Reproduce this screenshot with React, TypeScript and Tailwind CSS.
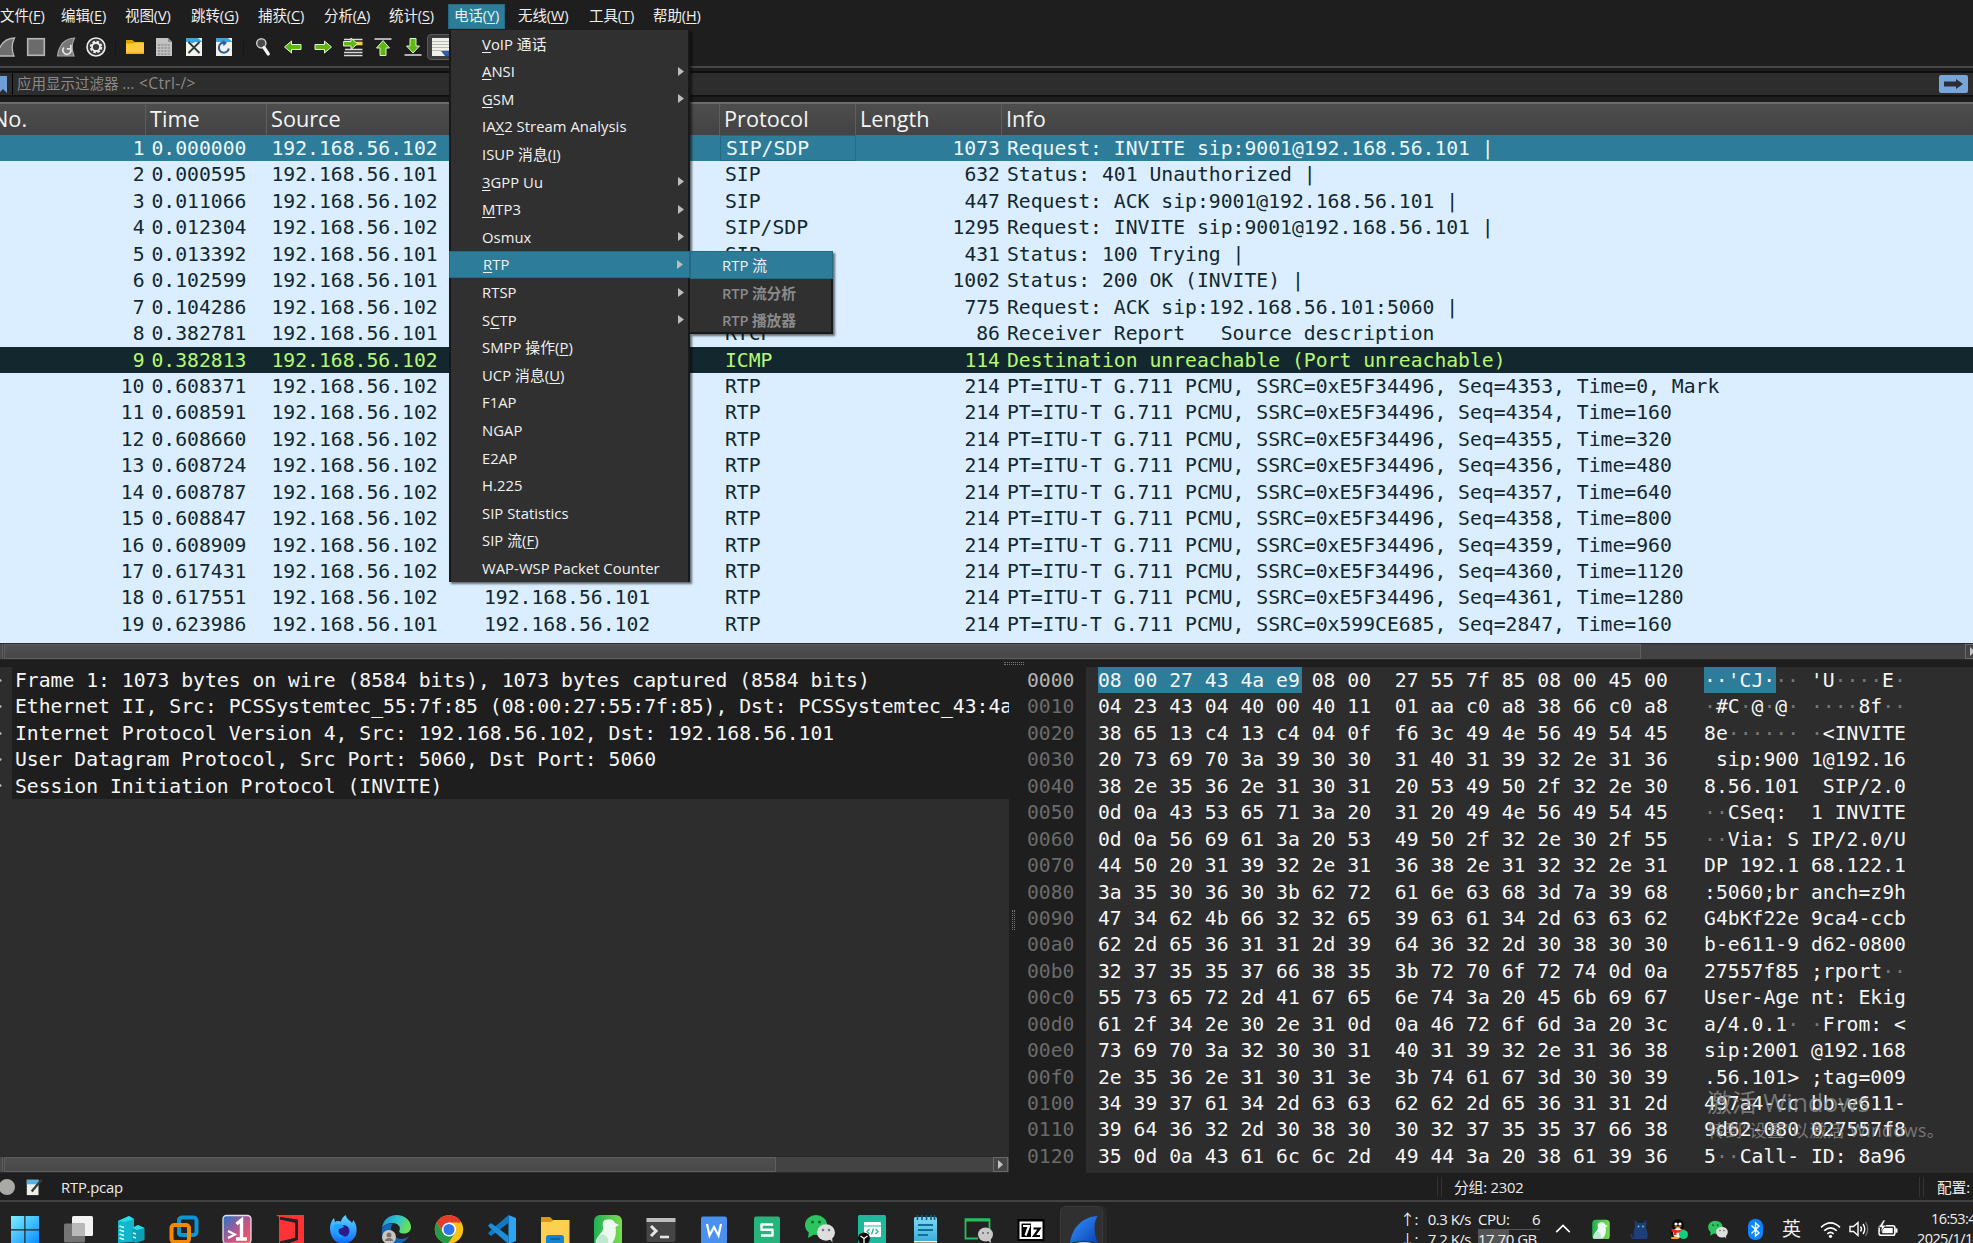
import { Fragment, type ReactNode } from "react";
import { clsx } from "clsx";

const UI = "font-['Open_Sans','Noto_Sans_CJK_SC',sans-serif]";
const MONO = "font-['DejaVu_Sans_Mono','Noto_Sans_CJK_SC',monospace] text-[19.73px] whitespace-pre";

/* ---------- data ---------- */

const menuBar = [
  { label: "文件", key: "F", width: "w-[61px]" },
  { label: "编辑", key: "E", width: "w-[64px]" },
  { label: "视图", key: "V", width: "w-[66px]" },
  { label: "跳转", key: "G", width: "w-[67px]" },
  { label: "捕获", key: "C", width: "w-[66px]" },
  { label: "分析", key: "A", width: "w-[65px]" },
  { label: "统计", key: "S", width: "w-[64px]" },
  { label: "电话", key: "Y", width: "w-[57px] mr-[8px]", active: true },
  { label: "无线", key: "W", width: "w-[71px]" },
  { label: "工具", key: "T", width: "w-[64px]" },
  { label: "帮助", key: "H", width: "w-[60px]" },
];

// the letter after "&" is the mnemonic
const telephonyMenu: { label: string; sub?: boolean; active?: boolean }[] = [
  { label: "&VoIP 通话" },
  { label: "&ANSI", sub: true },
  { label: "&GSM", sub: true },
  { label: "IA&X2 Stream Analysis" },
  { label: "ISUP 消息(&I)" },
  { label: "&3GPP Uu", sub: true },
  { label: "&MTP3", sub: true },
  { label: "Osmux", sub: true },
  { label: "&RTP", sub: true, active: true },
  { label: "RTSP", sub: true },
  { label: "S&CTP", sub: true },
  { label: "SMPP 操作(&P)" },
  { label: "UCP 消息(&U)" },
  { label: "F1AP" },
  { label: "NGAP" },
  { label: "E2AP" },
  { label: "H.225" },
  { label: "SIP Statistics" },
  { label: "SIP 流(&F)" },
  { label: "WAP-WSP Packet Counter" },
];

const A = "192.168.56.101";
const B = "192.168.56.102";
const rtp = (ssrc: string, seq: number, time: string) =>
  `PT=ITU-T G.711 PCMU, SSRC=0x${ssrc}, Seq=${seq}, Time=${time}`;

const packets: [string, string, string, string, number, string][] = [
  ["0.000000", B, A, "SIP/SDP", 1073, "Request: INVITE sip:9001@192.168.56.101 |"],
  ["0.000595", A, B, "SIP", 632, "Status: 401 Unauthorized |"],
  ["0.011066", B, A, "SIP", 447, "Request: ACK sip:9001@192.168.56.101 |"],
  ["0.012304", B, A, "SIP/SDP", 1295, "Request: INVITE sip:9001@192.168.56.101 |"],
  ["0.013392", A, B, "SIP", 431, "Status: 100 Trying |"],
  ["0.102599", A, B, "SIP/SDP", 1002, "Status: 200 OK (INVITE) |"],
  ["0.104286", B, A, "SIP", 775, "Request: ACK sip:192.168.56.101:5060 |"],
  ["0.382781", A, B, "RTCP", 86, "Receiver Report   Source description"],
  ["0.382813", B, A, "ICMP", 114, "Destination unreachable (Port unreachable)"],
  ["0.608371", B, A, "RTP", 214, rtp("E5F34496", 4353, "0, Mark")],
  ["0.608591", B, A, "RTP", 214, rtp("E5F34496", 4354, "160")],
  ["0.608660", B, A, "RTP", 214, rtp("E5F34496", 4355, "320")],
  ["0.608724", B, A, "RTP", 214, rtp("E5F34496", 4356, "480")],
  ["0.608787", B, A, "RTP", 214, rtp("E5F34496", 4357, "640")],
  ["0.608847", B, A, "RTP", 214, rtp("E5F34496", 4358, "800")],
  ["0.608909", B, A, "RTP", 214, rtp("E5F34496", 4359, "960")],
  ["0.617431", B, A, "RTP", 214, rtp("E5F34496", 4360, "1120")],
  ["0.617551", B, A, "RTP", 214, rtp("E5F34496", 4361, "1280")],
  ["0.623986", A, B, "RTP", 214, rtp("599CE685", 2847, "160")],
];

const tree = [
  "Frame 1: 1073 bytes on wire (8584 bits), 1073 bytes captured (8584 bits)",
  "Ethernet II, Src: PCSSystemtec_55:7f:85 (08:00:27:55:7f:85), Dst: PCSSystemtec_43:4a:e9",
  "Internet Protocol Version 4, Src: 192.168.56.102, Dst: 192.168.56.101",
  "User Datagram Protocol, Src Port: 5060, Dst Port: 5060",
  "Session Initiation Protocol (INVITE)",
];

const hexDump = [
  "08 00 27 43 4a e9 08 00 27 55 7f 85 08 00 45 00",
  "04 23 43 04 40 00 40 11 01 aa c0 a8 38 66 c0 a8",
  "38 65 13 c4 13 c4 04 0f f6 3c 49 4e 56 49 54 45",
  "20 73 69 70 3a 39 30 30 31 40 31 39 32 2e 31 36",
  "38 2e 35 36 2e 31 30 31 20 53 49 50 2f 32 2e 30",
  "0d 0a 43 53 65 71 3a 20 31 20 49 4e 56 49 54 45",
  "0d 0a 56 69 61 3a 20 53 49 50 2f 32 2e 30 2f 55",
  "44 50 20 31 39 32 2e 31 36 38 2e 31 32 32 2e 31",
  "3a 35 30 36 30 3b 62 72 61 6e 63 68 3d 7a 39 68",
  "47 34 62 4b 66 32 32 65 39 63 61 34 2d 63 63 62",
  "62 2d 65 36 31 31 2d 39 64 36 32 2d 30 38 30 30",
  "32 37 35 35 37 66 38 35 3b 72 70 6f 72 74 0d 0a",
  "55 73 65 72 2d 41 67 65 6e 74 3a 20 45 6b 69 67",
  "61 2f 34 2e 30 2e 31 0d 0a 46 72 6f 6d 3a 20 3c",
  "73 69 70 3a 32 30 30 31 40 31 39 32 2e 31 36 38",
  "2e 35 36 2e 31 30 31 3e 3b 74 61 67 3d 30 30 39",
  "34 39 37 61 34 2d 63 63 62 62 2d 65 36 31 31 2d",
  "39 64 36 32 2d 30 38 30 30 32 37 35 35 37 66 38",
  "35 0d 0a 43 61 6c 6c 2d 49 44 3a 20 38 61 39 36",
];

/* ---------- toolbar icons ---------- */

function Svg({ children, size = 20, className }: { children: ReactNode; size?: number; className?: string }) {
  return (
    <svg width={size} height={size} viewBox="0 0 20 20" fill="none" className={clsx("shrink-0", className)}>
      {children}
    </svg>
  );
}

const FIN = "M1.5 19C3 8 9 1.5 18.5 1C15.5 7 15.5 13 18 19Z";

const StartFin = () => (
  <Svg><path d={FIN} fill="#6d6d6d" stroke="#b9b9b9" strokeWidth="1.3" /></Svg>
);
const StopIcon = () => (
  <Svg><rect x="1.7" y="1.7" width="16.6" height="16.6" fill="#6b6b6b" stroke="#b5b5b5" strokeWidth="1.6" /></Svg>
);
const RestartFin = () => (
  <Svg>
    <path d={FIN} fill="#777" stroke="#a9a9a9" strokeWidth="1.2" />
    <path d="M8 10.5A4 4 0 1 0 14.5 11.5M14.8 7.8V11.8H10.8" stroke="#e2e2e2" strokeWidth="1.7" />
  </Svg>
);
const OptionsIcon = () => (
  <Svg>
    <circle cx="10" cy="10" r="9" fill="#3a3a3a" stroke="#ededed" strokeWidth="1.6" />
    <circle cx="10" cy="10" r="5.3" stroke="#ededed" strokeWidth="2" strokeDasharray="2.6 1.55" />
    <circle cx="10" cy="10" r="4" stroke="#ededed" strokeWidth="1.8" />
  </Svg>
);
const OpenFolder = () => (
  <Svg>
    <path d="M1 3H7.5L9.5 5H18.5V8H1Z" fill="#e0a100" />
    <path d="M1 6.5H8L10 5.5H19V17H1Z" fill="#ffca3f" />
    <path d="M1 15.5H19V17H1Z" fill="#f0ad1c" />
  </Svg>
);
const SaveFile = () => (
  <Svg>
    <path d="M2 1H14L18 5V19H2Z" fill="#c2c2c2" />
    <path d="M14 1V5H18Z" fill="#8d8d8d" />
    <path d="M4 8H16M4 11H16M4 14H16M4 17H16" stroke="#909090" strokeWidth="1.5" strokeDasharray="2.2 1" />
  </Svg>
);
const CloseFile = () => (
  <Svg>
    <path d="M2 1H18V19H2Z" fill="#f3f3ea" />
    <path d="M2 1H18V5H11L8 6.5L6 5H2Z" fill="#3aa6df" />
    <path d="M14 1H18V4.5Z" fill="#e8f4fb" />
    <path d="M4.5 5L15.5 16M15.5 5L4.5 16" stroke="#2c3a42" strokeWidth="1.8" />
  </Svg>
);
const ReloadFile = () => (
  <Svg>
    <path d="M2 1H18V19H2Z" fill="#f3f3ea" />
    <path d="M2 1H18V5H11L8 6.5L6 5H2Z" fill="#3aa6df" />
    <path d="M14 1H18V4.5Z" fill="#e8f4fb" />
    <path d="M11 5.8A5 5 0 1 0 14.8 11.5" stroke="#2f5b9c" strokeWidth="2" />
    <path d="M8.5 3L13 5.8L9.5 9.2Z" fill="#2f5b9c" />
  </Svg>
);
const FindIcon = () => (
  <Svg>
    <circle cx="8.3" cy="6.3" r="4.6" fill="#4a4a4a" stroke="#c8c8c8" strokeWidth="1.5" />
    <path d="M11 10.5L15.3 17" stroke="#f4f4f4" strokeWidth="3.2" strokeLinecap="round" />
  </Svg>
);
const GREEN = { fill: "#5fb80f", stroke: "#e2f3d2", strokeWidth: 1 };
const ArrowLeft = () => (
  <Svg><path d="M1.5 10L8.5 4V7.5H18V12.5H8.5V16Z" {...GREEN} /></Svg>
);
const ArrowRight = () => (
  <Svg><path d="M18.5 10L11.5 4V7.5H2V12.5H11.5V16Z" {...GREEN} /></Svg>
);
const GotoPacket = () => (
  <Svg>
    <path d="M1 2.5H19.5M2 12.5H19.5M1 15.5H19.5M1 18.5H19.5" stroke="#dcdcdc" strokeWidth="1.7" />
    <path d="M12 6.5H19.5" stroke="#f3d23a" strokeWidth="3.6" />
    <path d="M14.5 6.7L8 1V4.5H0.6V9H8V12.5Z" {...GREEN} />
  </Svg>
);
const FirstPacket = () => (
  <Svg>
    <path d="M1.5 2H18.5" stroke="#d6d6d6" strokeWidth="1.6" />
    <path d="M10 3.5L16.5 11H13V18.5H7V11H3.5Z" {...GREEN} />
  </Svg>
);
const LastPacket = () => (
  <Svg>
    <path d="M1.5 18H18.5" stroke="#d6d6d6" strokeWidth="1.6" />
    <path d="M10 16L16.5 9H13V1.5H7V9H3.5Z" {...GREEN} />
  </Svg>
);
const AutoScroll = () => (
  <Svg>
    <path d="M1 1H19V19H1Z" fill="#f1f1ea" />
    <path d="M1 4.5H19M1 7.5H19M1 10.5H19M1 13.5H19" stroke="#b5b8b5" />
    <path d="M10 14H19V19H14Z" fill="#2b5fae" />
  </Svg>
);

const toolGroups: ReactNode[][] = [
  [<StartFin />, <StopIcon />, <RestartFin />, <OptionsIcon />],
  [<OpenFolder />, <SaveFile />, <CloseFile />, <ReloadFile />],
  [<FindIcon />, <ArrowLeft />, <ArrowRight />, <GotoPacket />, <FirstPacket />, <LastPacket />],
];

/* ---------- top bars ---------- */

function MenuBar() {
  return (
    <div className={clsx(UI, "flex h-[29px] shrink-0 -ml-[5px] pt-1 text-[14.5px] tracking-[-0.1px] text-[#f0f0f0]")}>
      {menuBar.map((m) => (
        <div
          key={m.key}
          className={clsx(
            "flex h-[25px] shrink-0 items-center whitespace-nowrap pb-[2px] pl-[5px]",
            m.width,
            m.active && "border border-[#256a85] bg-[#2d7d9a] pl-1",
          )}
        >
          {m.label}(<span className="underline underline-offset-2">{m.key}</span>)
        </div>
      ))}
    </div>
  );
}

function ToolBar() {
  return (
    <div className="flex h-[37px] shrink-0 items-center -ml-[9px] pb-px">
      {toolGroups.map((group, g) => (
        <Fragment key={g}>
          {g > 0 && <div className="mx-1 h-4 w-px shrink-0 bg-[#161616]" />}
          {group.map((icon, i) => (
            <div key={i} className="flex w-[29.9px] shrink-0 justify-center">{icon}</div>
          ))}
        </Fragment>
      ))}
      <div className="flex h-[26px] w-[28px] shrink-0 items-center justify-center rounded-sm border border-[#5c5c5c] bg-[#3c3c3c]">
        <AutoScroll />
      </div>
    </div>
  );
}

function FilterBar() {
  return (
    <div className="flex h-[36px] shrink-0 flex-col border-t-2 border-[#454545] bg-[#1d1d1d] pt-[3px]">
      <div className="flex h-[26px] items-center border-y-2 border-[#101010] bg-[#2d2d2d]">
        <div className="flex h-full w-[13px] shrink-0 items-center border-r border-black">
          <svg width="7" height="17" viewBox="0 0 7 17">
            <path d="M0 0H7V17L3 13L0 16Z" fill="#6f9fd6" />
          </svg>
        </div>
        <div className={clsx(UI, "grow pl-[4px] text-[14.5px] text-[#8a8a8a]")}>
          应用显示过滤器 <span className="text-[15.6px] tracking-[0.3px]">… &lt;Ctrl-/&gt;</span>
        </div>
        <svg width="29" height="18" viewBox="0 0 29 18" className="mr-[5px] shrink-0">
          <rect width="29" height="18" rx="2" fill="#78a5da" />
          <path d="M5 6.5H17V4L24 9L17 14V11.5H5Z" fill="#2b2f35" />
        </svg>
      </div>
    </div>
  );
}

/* ---------- packet list ---------- */

function PacketHeader() {
  const names = ["No.", "Time", "Source", "Destination", "Protocol", "Length", "Info"];
  return (
    <div
      className={clsx(
        UI,
        "grid h-[35px] shrink-0 grid-cols-[146px_121px_213px_240px_136px_146px_1fr] border-b-2 border-t-2 border-b-[#1a1a1a] border-t-[#6a6a6a] bg-linear-to-b from-[#4d4d4d] to-[#434343] text-[21.7px] text-[#f4f4f4]",
      )}
    >
      {names.map((n, i) => (
        <div
          key={n}
          className={clsx(
            "flex items-center overflow-hidden whitespace-nowrap border-r",
            i < 6 ? "border-[#5e5e5e]" : "border-transparent",
            i === 0 ? "pl-0" : "pl-1",
          )}
        >
          <span className={clsx(i === 0 && "-ml-[8px]")}>{n}</span>
        </div>
      ))}
    </div>
  );
}

function PacketList() {
  return (
    <div className={clsx(MONO, "h-[508px] shrink-0 overflow-hidden bg-[#daeeff] text-[#12272e]")}>
      {packets.map(([time, src, dst, proto, len, info], i) => (
        <div
          key={i}
          className={clsx(
            "grid h-[26.45px] grid-cols-[147px_121px_212px_240px_136px_146px_1fr] leading-[28.4px]",
            i === 0 && "bg-[#2d7d9a] text-[#eef7fa]",
            i === 8 && "bg-[#12272e] text-[#b7f774]",
          )}
        >
          <span className="pr-[2.5px] text-right">{i + 1}</span>
          <span className="pl-[4.5px]">{time}</span>
          <span className="pl-[3.5px]">{src}</span>
          <span className="pl-[4px]">{dst}</span>
          <span className={clsx("h-[26.45px] pl-[5px]", i === 0 && "border border-[#256a85] pl-[4px] leading-[26.4px]")}>{proto}</span>
          <span className="pr-[2px] text-right">{len}</span>
          <span className="pl-[5px]">{info}</span>
        </div>
      ))}
    </div>
  );
}

function ScrollBar({ thumb, clipped }: { thumb: string; clipped?: boolean }) {
  return (
    <div className="flex h-[17px] shrink-0 overflow-hidden border-y border-[#2a2a2a] bg-[#434343]">
      <div className="mr-px w-[3px] shrink-0 border-r border-[#5e5e5e] bg-[#4a4a4a]" />
      <div className={clsx(thumb, "shrink-0 border border-[#5e5e5e] bg-linear-to-b from-[#4f4f4f] to-[#484848]")} />
      <div className="grow" />
      <div
        className={clsx(
          "flex w-[15px] shrink-0 items-center justify-center border border-[#6a6a6a] bg-[#454545]",
          clipped ? "-mr-[7px]" : "mr-px",
        )}
      >
        <svg width="5" height="9" viewBox="0 0 5 9"><path d="M0 0L5 4.5L0 9Z" fill="#c4c4c4" /></svg>
      </div>
    </div>
  );
}

/* ---------- detail panes ---------- */

function DetailTree() {
  return (
    <div className="flex w-[1009px] shrink-0 flex-col bg-[#2d2d2d]">
      <div className="h-[489px] overflow-hidden">
        {tree.map((t) => (
          <div key={t} className="flex h-[26.45px] items-center">
            <svg width="12" height="9" viewBox="0 0 12 9" className="shrink-0">
              <path d="M-3 0L2 4.5L-3 9Z" fill="#b0b0b0" />
            </svg>
            <div className={clsx(MONO, "h-full w-[997px] shrink-0 overflow-hidden bg-[#1e1e1e] pl-[3px] leading-[28.4px] text-[#f6f6f6]")}>{t}</div>
          </div>
        ))}
      </div>
      <ScrollBar thumb="w-[772px]" />
    </div>
  );
}

const ascii = (byte: string) => {
  const n = parseInt(byte, 16);
  return n >= 32 && n < 127 ? String.fromCharCode(n) : "·";
};

function AsciiRun({ bytes }: { bytes: string[] }) {
  return (
    <>
      {bytes.map((b, i) => {
        const c = ascii(b);
        return c === "·" ? <span key={i} className="text-[#777777]">{c}</span> : c;
      })}
    </>
  );
}

function HexRow({ line, row }: { line: string; row: number }) {
  const bytes = line.split(" ");
  const mark = row === 0 ? 6 : 0;
  return (
    <div className="flex h-[26.45px] leading-[28.4px]">
      <span className={clsx("w-[59px] shrink-0", row === 0 ? "text-[#b4b4b4]" : "text-[#6b6b6b]")}>
        {(row * 16).toString(16).padStart(4, "0")}
      </span>
      <span className="w-[618px] shrink-0 pl-[12px]">
        {mark > 0 && <span className="-mr-[2px] inline-block h-full bg-[#2d7d9a] pr-[2px]">{bytes.slice(0, mark).join(" ")}</span>}
        {mark > 0 && " "}
        {bytes.slice(mark, 8).join(" ")}
        {"  "}
        {bytes.slice(8).join(" ")}
      </span>
      <span>
        {mark > 0 && <span className="-mr-px inline-block h-full bg-[#2d7d9a] pr-px">{bytes.slice(0, mark).map(ascii).join("")}</span>}
        <AsciiRun bytes={bytes.slice(mark, 8)} /> <AsciiRun bytes={bytes.slice(8)} />
      </span>
    </div>
  );
}

function HexPane() {
  return (
    <div className={clsx(MONO, "relative grow overflow-hidden bg-linear-to-r from-[#1e1e1e] from-[59px] to-[#2d2d2d] to-[59px] text-[#f6f6f6]")}>
      {hexDump.map((line, i) => (
        <HexRow key={i} line={line} row={i} />
      ))}
      <div className={clsx(UI, "absolute left-[680px] top-[418px] text-[#9a9a9a]/70")}>
        <div className="text-[24.8px] leading-[34px] tracking-[0.1px]">激活 Windows</div>
        <div className="text-[17.5px] leading-[22px] tracking-[0.35px]">转到“设置”以激活 Windows。</div>
      </div>
    </div>
  );
}

/* ---------- telephony menu ---------- */

function Mnemonic({ text }: { text: string }) {
  const at = text.indexOf("&");
  if (at < 0) return <>{text}</>;
  return (
    <>
      {text.slice(0, at)}
      <span className="underline underline-offset-2">{text[at + 1]}</span>
      {text.slice(at + 2)}
    </>
  );
}

function TelephonyMenu() {
  return (
    <div className={clsx(UI, "absolute left-[449px] top-[30px] z-10 flex items-start text-[14.8px] tracking-[0.05px] text-[#f2f2f2]")}>
      <div className="h-[552px] w-[241px] border-x-2 border-[#191919] bg-[#303030] shadow-[2px_2px_2px_rgba(0,0,0,0.55)]">
        {telephonyMenu.map((m) => (
          <div
            key={m.label}
            className={clsx(
              "-mx-[2px] flex h-[27.6px] items-center justify-between whitespace-pre pl-[33px] pr-[6px]",
              m.active && "border border-[#256a85] bg-[#2d7d9a] pl-[32px] pr-[5px]",
            )}
          >
            <span><Mnemonic text={m.label} /></span>
            {m.sub && (
              <svg width="6" height="9" viewBox="0 0 6 9"><path d="M0 0L6 4.5L0 9Z" fill="#bdbdbd" /></svg>
            )}
          </div>
        ))}
      </div>
      <div className="mt-[221px] h-[83px] w-[143px] border-b-2 border-r-2 border-[#191919] bg-[#303030] shadow-[2px_2px_2px_rgba(0,0,0,0.55)]">
        <div className="-mr-[2px] flex h-[28px] items-center border border-[#256a85] bg-[#2d7d9a] pl-[31px]">RTP 流</div>
        <div className="flex h-[27.6px] items-center pl-[32px] font-semibold text-[#8a8a8a] tracking-[-0.2px]">RTP 流分析</div>
        <div className="flex h-[27px] items-center pl-[32px] font-semibold text-[#8a8a8a] tracking-[-0.2px]">RTP 播放器</div>
      </div>
    </div>
  );
}

/* ---------- status bar ---------- */

const Grip = () => <div className="h-5 w-[5px] shrink-0 border-x border-[#333333]" />;

function StatusBar() {
  return (
    <div className={clsx(UI, "flex h-[27px] shrink-0 items-center bg-[#1e1e1e] pt-px text-[14.8px] tracking-[-0.2px] text-[#ececec]")}>
      <div className="-ml-px mb-px h-4 w-4 shrink-0 rounded-full bg-[#a9aaa6]" />
      <Svg size={18} className="ml-[10px]">
        <path d="M2 2H15V19H2Z" fill="#efefea" />
        <path d="M2 2H15V7H2Z" fill="#55b2e4" />
        <path d="M18.5 2L9 13L7.5 15" stroke="#3a3a3a" strokeWidth="2.6" />
      </Svg>
      <div className="ml-[18px] w-[1376px] shrink-0">RTP.pcap</div>
      <Grip />
      <div className="ml-[12px] w-[465px] shrink-0">分组: 2302</div>
      <Grip />
      <div className="ml-[13px] whitespace-nowrap">配置: Default</div>
    </div>
  );
}

/* ---------- taskbar icons ---------- */

function App32({ children }: { children: ReactNode }) {
  return (
    <svg width="30" height="30" viewBox="0 0 30 30" fill="none" className="mx-[11.47px] shrink-0">
      {children}
    </svg>
  );
}

function WeChatShape() {
  return (
    <>
      <ellipse cx="11" cy="11" rx="11" ry="10" fill="#2dc45f" />
      <path d="M4 17L3 24L10 20Z" fill="#2dc45f" />
      <circle cx="7.5" cy="8" r="1.6" fill="#146b31" />
      <circle cx="14.5" cy="8" r="1.6" fill="#146b31" />
      <ellipse cx="21" cy="18.5" rx="9" ry="8.2" fill="#dedede" />
      <path d="M24 24L27.5 28.5L27 22Z" fill="#dedede" />
      <circle cx="18" cy="16" r="1.3" fill="#777" />
      <circle cx="24" cy="16" r="1.3" fill="#777" />
    </>
  );
}

function BirdShape() {
  return (
    <>
      <rect x="1" y="1" width="28" height="32" rx="6" fill="url(#bird)" />
      <path d="M12 6C17 4 21 6 22 9L26 11L22.5 13C24 21 21 29 17 31H3C1 24 9 20 10.5 14C9 11 9.5 7 12 6Z" fill="#eefaf1" />
      <path d="M3 31C3 23 8 19 12 21C16 24 16 28 14 31Z" fill="#bfe9cc" />
    </>
  );
}

function Gradients() {
  return (
    <svg width="0" height="0">
      <defs>
        <linearGradient id="win" x1="0" y1="0" x2="1" y2="1"><stop stopColor="#7df0ff" /><stop offset="1" stopColor="#078bff" /></linearGradient>
        <linearGradient id="mob" x1="0" y1="0" x2="1" y2="1"><stop stopColor="#1d76cb" /><stop offset=".55" stopColor="#c0558a" /><stop offset="1" stopColor="#ff5a5a" /></linearGradient>
        <linearGradient id="fox" x1="0" y1="0" x2="0" y2="1"><stop stopColor="#5fd6ff" /><stop offset="1" stopColor="#0a6cff" /></linearGradient>
        <linearGradient id="edge" x1="0" y1="0" x2="1" y2="0.3"><stop stopColor="#1b8fd6" /><stop offset=".55" stopColor="#2cc3d2" /><stop offset="1" stopColor="#69e05a" /></linearGradient>
        <linearGradient id="bird" x1="0" y1="0" x2="1" y2="0"><stop stopColor="#1fb155" /><stop offset="1" stopColor="#7adb4e" /></linearGradient>
        <linearGradient id="note" x1="0" y1="0" x2="0" y2="1"><stop stopColor="#7fd8f2" /><stop offset="1" stopColor="#35a9d6" /></linearGradient>
        <linearGradient id="shark" x1="0" y1="0" x2="1" y2="1"><stop stopColor="#3a93ff" /><stop offset="1" stopColor="#0743b5" /></linearGradient>
      </defs>
    </svg>
  );
}

function TaskIcons() {
  return (
    <div className="-ml-px flex items-start">
      <Gradients />
      <App32>
        <path d="M1 2H14.3V15.3H1ZM15.5 2H29V15.3H15.5ZM1 16.5H14.3V30H1ZM15.5 16.5H29V30H15.5Z" fill="url(#win)" />
      </App32>
      <App32>
        <rect x="9" y="2" width="21" height="20" rx="1.5" fill="#f2f2f2" />
        <rect x="1" y="9.5" width="21" height="19" rx="1.5" fill="#757575" />
        <path d="M9 9.5H22V22H9Z" fill="#b9b9b9" />
      </App32>
      <App32>
        <path d="M2 7L13 2L18 5V28L2 29Z" fill="#12b5c9" />
        <path d="M2 7L13 2L18 5L9 8Z" fill="#23e0ec" />
        <path d="M16 14L22 11L28.5 14V26L20 29L16 28Z" fill="#0c9fb5" />
        <path d="M16 14L22 11L28.5 14L21 16Z" fill="#23e0ec" />
        <path d="M3.5 12L8 13.5M3.5 16L8 17.5M3.5 20L8 21.5M3.5 24L8 25.5M17 19L20 20M17 23L20 24" stroke="#d6fbff" strokeWidth="1.7" />
      </App32>
      <App32>
        <rect x="10" y="3.5" width="17.5" height="17.5" rx="3" stroke="#0a95d6" strokeWidth="4" />
        <rect x="2.5" y="11" width="17.5" height="17" rx="3" stroke="#f38b00" strokeWidth="4" />
        <path d="M10 13V18.5Q10 21 13 21H18" stroke="#0a95d6" strokeWidth="4" />
      </App32>
      <App32>
        <rect x="1" y="1.5" width="28" height="28" rx="3.5" fill="url(#mob)" stroke="#e8dfe8" strokeWidth="1.3" />
        <path d="M6 17L13 20.5L6 24" stroke="#fff" strokeWidth="2" />
        <path d="M14.5 10L19.500 6V25M14 25H25" stroke="#fff" strokeWidth="3.4" />
      </App32>
      <App32>
        <path d="M1 1H29V30H12L23 26V5.5L5 3V26L12 30H4V3Z" fill="#ff3236" />
        <path d="M5 4L20 7.5V24L5 28Z" fill="#ff3236" />
        <path d="M5 4.500L21.5 8V24.500L5 28.500" stroke="#222222" strokeWidth="2" />
      </App32>
      <App32>
        <path d="M2 14C2 9 5 5 6 4L7 8C9 6.5 12 7 13 8C13 5 16 2 18 1C18 5 22 6 24 9L25.5 6C28 10 29 13 28.5 18C27.5 25 22 29.5 15 29.5C7 29.5 2 23 2 14Z" fill="url(#fox)" />
        <circle cx="15.5" cy="17" r="6" fill="#2a1a8c" />
        <path d="M6 11C10 9 15 10 16 13L11 15C9 19 13 22 17 22C12 25 6 21 6 11Z" fill="#1ba6ff" />
      </App32>
      <App32>
        <path d="M1 14C2 6 8 1 15.5 1C24 1 30 7 30 13C30 17 27 19.5 23 19.5C19 19.5 17.5 18 18.5 16.5C20 13 17 9 12 9C7 9 3 11 1 14Z" fill="url(#edge)" />
        <path d="M1 15C3 10 8 9 12 10C9 12 9 18 13 22C17 26 23 26 28 22C25 27 21 30 15 30C6 30 0 23 1 15Z" fill="#1467b8" />
        <circle cx="8" cy="23" r="7" fill="#c9c5bf" />
        <circle cx="8" cy="21" r="2.5" fill="#77736e" />
        <path d="M3.8 27C4 23 12 23 12.2 27Z" fill="#77736e" />
      </App32>
      <App32>
        <circle cx="15" cy="15.5" r="14.2" fill="#fbc116" />
        <path d="M2.7 8.4A14.2 14.2 0 0 1 27.3 8.4H15L9 18.5Z" fill="#e33b2e" />
        <path d="M2.7 8.4A14.2 14.2 0 0 0 14 29.7L21 19L9 19Z" fill="#229c4a" />
        <circle cx="15" cy="15.5" r="7" fill="#fff" />
        <circle cx="15" cy="15.5" r="5.5" fill="#2f74ea" />
      </App32>
      <App32>
        <path d="M21.5 1L29 4V27L21.5 30Z" fill="#2aa5f2" />
        <path d="M21.5 1V9L4 22L1 19.5L3 17Z" fill="#0f79c4" />
        <path d="M21.5 30V22L4 9L1 11.5L3 14Z" fill="#1b8fdc" />
      </App32>
      <App32>
        <path d="M1 3H10L13 6H29V12H1Z" fill="#d99a12" />
        <path d="M1 8H11L14 6H29.5V30H1Z" fill="#ffd04f" />
        <rect x="6" y="21" width="18" height="10" rx="2.5" fill="#1483d2" />
        <path d="M10 25H20" stroke="#0a5b9c" strokeWidth="1.5" />
      </App32>
      <App32><BirdShape /></App32>
      <App32>
        <rect x="0.5" y="4" width="29" height="24" rx="2" fill="#454545" />
        <path d="M0.5 4H29.5V8H0.5Z" fill="#bdbdbd" />
        <path d="M5 12L10 17L5 22" stroke="#e6e6e6" strokeWidth="3" />
        <path d="M14 23H23" stroke="#e6e6e6" strokeWidth="2.6" />
      </App32>
      <App32>
        <rect x="2" y="2.5" width="26" height="27" rx="2" fill="#4a90ef" />
        <path d="M8 10L10.5 21.5L15 13L19.5 21.5L22 10" stroke="#fff" strokeWidth="2.2" />
      </App32>
      <App32>
        <rect x="2" y="2.5" width="26" height="27" rx="2" fill="#27b37c" />
        <path d="M21 10.5H9.5V15.7H20.5V21.5H9" stroke="#fff" strokeWidth="2.4" strokeLinejoin="round" />
      </App32>
      <App32><WeChatShape /></App32>
      <App32>
        <rect x="1" y="1" width="28" height="30" rx="1.5" fill="#1cb99c" />
        <rect x="7" y="8" width="17" height="15" rx="1" fill="#fff" />
        <path d="M7 12H24" stroke="#1cb99c" />
        <path d="M12.5 15L10 17.5L12.5 20M18.5 15L21 17.5L18.5 20M16.5 14.5L14.5 20.5" stroke="#1cb99c" strokeWidth="1.3" />
        <circle cx="7" cy="24.5" r="6" fill="#0b0b0b" />
        <path d="M3.5 22L7 24.5L10.5 22M7 24.5V29" stroke="#fff" strokeWidth="1.2" />
      </App32>
      <App32>
        <rect x="4" y="3" width="23" height="27" rx="1.5" fill="url(#note)" />
        <path d="M4 27H27V28.5H4Z" fill="#fff" />
        <path d="M4 28.5H27V30H4Z" fill="#c2500e" />
        <path d="M7.5 1V6M12 1V6M16.5 1V6M21 1V6M24.5 1V6" stroke="#0e5b80" strokeWidth="1.6" />
        <path d="M8 11H23M8 16H23M8 21H18" stroke="#0e6f99" strokeWidth="1.8" />
      </App32>
      <App32>
        <path d="M26.5 15V5.5H2.5V24.5H15" stroke="#20c25a" strokeWidth="1.8" />
        <path d="M2 4.5H27V7.5H2Z" fill="#20c25a" />
        <ellipse cx="22.5" cy="20.5" rx="7.5" ry="7" fill="#c9c9c9" />
        <path d="M24 26L28 29L27.5 24Z" fill="#c9c9c9" />
        <circle cx="20" cy="19" r="1" fill="#666" />
        <circle cx="25" cy="19" r="1" fill="#666" />
      </App32>
      <App32>
        <rect x="1.5" y="5" width="27" height="22" fill="#000" />
        <rect x="3.5" y="7.5" width="23" height="17.5" fill="#fff" />
        <rect x="5.5" y="9.5" width="9.5" height="13.5" fill="#000" />
        <path d="M7 12H13L9.5 21.5" stroke="#fff" strokeWidth="2.2" />
        <path d="M17.5 14.5H23.5L18 22H24" stroke="#000" strokeWidth="2.2" />
      </App32>
      <div className="-mt-[8px] ml-[2px] flex h-12 w-[43px] shrink-0 rounded-md border border-[#3a3a3a] bg-[#303030] pt-[8px] shadow-[4px_0_0_#292929]">
        <svg width="30" height="32" viewBox="0 0 30 32" className="ml-[8px]">
          <path d="M1 28C3 14 12 2 28.5 1C24 9 25 20 29 28Q15 24 1 28Z" fill="url(#shark)" />
          <path d="M1 30Q15 24 29 30V32H1Z" fill="#b9d8ff" />
        </svg>
      </div>
    </div>
  );
}

function Tray() {
  return (
    <div className={clsx(UI, "flex h-full shrink-0 text-[15px] text-[#f0f0f0]")}>
      <div className="flex w-[145px] shrink-0 flex-col pt-[8px] text-[15px] leading-[19px] tracking-[-0.5px]">
        <div className="flex">
          <span className="w-[21px]">↑:</span>
          <span className="w-[51px] pr-px text-right">0.3 K/s</span>
          <span className="ml-[6px] flex w-[62px] justify-between border-b border-[#555555]"><span>CPU:</span><span>6</span></span>
        </div>
        <div className="flex">
          <span className="w-[21px]">↓:</span>
          <span className="w-[51px] pr-px text-right">7.2 K/s</span>
          <span className="ml-[6px] w-[62px] bg-linear-to-r from-[#555555] from-50% to-transparent to-50%">17.70 GB</span>
        </div>
      </div>
      <div className="flex h-[54px] items-center">
        <Svg size={18} className="ml-[9px] mr-[19px]"><path d="M2.5 13.5L10 6L17.5 13.5" stroke="#fff" strokeWidth="1.8" /></Svg>
        <svg width="20" height="20" viewBox="0 0 30 32" className="mr-[19px]"><BirdShape /></svg>
        <svg width="20" height="20" viewBox="0 0 20 20" className="mr-[19px]">
          <path d="M4 19C3 14 4 10 5 8L4.5 1L8 4H13L16.5 1L16 9C18 13 18 17 17 20H4Z" fill="#1c3f78" />
          <path d="M4 20Q1 19 1.5 15" stroke="#1c3f78" strokeWidth="1.5" fill="none" />
          <circle cx="8.5" cy="7.5" r="1" fill="#7fb0e8" />
          <circle cx="13" cy="7.5" r="1" fill="#7fb0e8" />
        </svg>
        <svg width="20" height="20" viewBox="0 0 20 20" className="mr-[19px]">
          <ellipse cx="9" cy="7" rx="6" ry="7" fill="#0c0c0c" />
          <ellipse cx="9" cy="13" rx="7.5" ry="6.5" fill="#0c0c0c" />
          <ellipse cx="9" cy="14" rx="5" ry="5" fill="#fff" />
          <circle cx="7" cy="5" r="1.6" fill="#fff" />
          <circle cx="11" cy="5" r="1.6" fill="#fff" />
          <path d="M5 7.5H13L9 9.5Z" fill="#f9a51a" />
          <path d="M2.5 9.5Q9 13 15.5 9.5V12.5Q9 15 2.5 12.5ZM4.5 12H7.5V16H4.5Z" fill="#e6252b" />
          <ellipse cx="6" cy="19" rx="4" ry="1.5" fill="#f9a51a" />
          <circle cx="14.5" cy="15.5" r="4.5" fill="#12cf7d" />
        </svg>
        <svg width="20" height="19" viewBox="0 0 30 29" className="mr-[20px]"><WeChatShape /></svg>
        <svg width="15" height="21" viewBox="0 0 15 21" fill="none" className="mr-[19px]">
          <rect width="15" height="21" rx="7" fill="#0a84ff" />
          <path d="M3.5 6.5L11 14L7.5 17V4L11 7L3.5 14.5" stroke="#fff" strokeWidth="1.4" />
        </svg>
        <span className="w-[20px] text-[19px] leading-5">英</span>
        <Svg size={21} className="ml-[18px]">
          <path d="M1 8Q10 -0.5 19 8M4 11.2Q10 5.5 16 11.2M7 14.2Q10 11.5 13 14.2" stroke="#fff" strokeWidth="1.6" />
          <circle cx="10" cy="16.5" r="1.5" fill="#fff" />
        </Svg>
        <Svg size={20} className="ml-[8px]">
          <path d="M1 7.5H4.5L9 3.5V16.5L4.5 12.5H1Z" stroke="#fff" strokeWidth="1.4" />
          <path d="M11.5 7.5Q13.5 10 11.5 12.5M14 5Q17.5 10 14 15" stroke="#fff" strokeWidth="1.4" />
          <path d="M16.5 3Q21 10 16.5 17" stroke="#777" strokeWidth="1.2" />
        </Svg>
        <Svg size={21} className="ml-[8px]">
          <rect x="2" y="6.5" width="15" height="9" rx="2" stroke="#fff" strokeWidth="1.5" />
          <rect x="5" y="8.5" width="10" height="5" fill="#fff" />
          <path d="M18.5 9V13" stroke="#fff" strokeWidth="2" />
          <path d="M6 1L1.500 8H4.5L3 13L8.5 6H5.5L8 1Z" fill="#fff" stroke="#222" strokeWidth=".6" />
        </Svg>
      </div>
      <div className="ml-[17px] flex w-[58px] shrink-0 flex-col overflow-hidden whitespace-nowrap pt-[7px] text-[14.5px] leading-[20px] tracking-[-0.6px]">
        <span className="pl-[16px]">16:53:42</span>
        <span className="pl-[2px]">2025/1/14</span>
      </div>
    </div>
  );
}

function TaskBar() {
  return (
    <div className="flex h-[43px] shrink-0 justify-between overflow-hidden border-t-2 border-[#424242] bg-[#222222]">
      <div className="pt-[12px]"><TaskIcons /></div>
      <Tray />
    </div>
  );
}

export default function App() {
  return (
    <div className="relative flex h-[1243px] w-[1973px] flex-col overflow-hidden bg-[#1e1e1e]">
      <MenuBar />
      <ToolBar />
      <FilterBar />
      <PacketHeader />
      {/* pulls the first row up under the header line */}
      <div className="-mt-[2px] flex flex-col">
        <PacketList />
        <ScrollBar thumb="w-[1637px]" clipped />
      </div>
      <div className="flex h-[7px] shrink-0 items-center pl-[1004px]">
        <div className="h-[3px] w-5 border-y border-dotted border-[#777777]" />
      </div>
      <div className="flex h-[506px] shrink-0">
        <DetailTree />
        <div className="flex w-[18px] shrink-0 items-center pl-[3px]">
          <div className="h-5 w-[3px] border-x border-dotted border-[#777777]" />
        </div>
        <HexPane />
      </div>
      <StatusBar />
      <TaskBar />
      <TelephonyMenu />
    </div>
  );
}
